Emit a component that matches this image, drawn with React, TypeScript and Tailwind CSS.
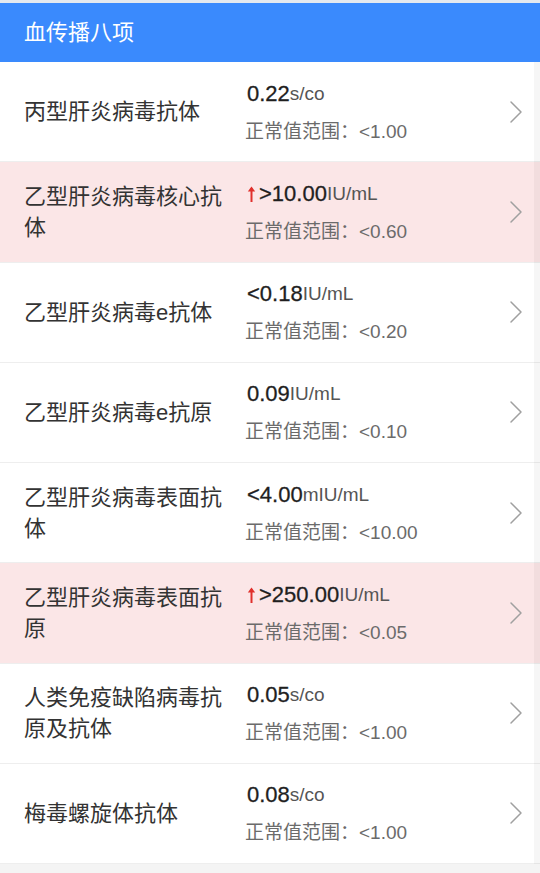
import React from "react";

type Item = {
  name: string;
  value: string;
  unit: string;
  range: string;
  high?: boolean;
};

const items: Item[] = [
  { name: "丙型肝炎病毒抗体", value: "0.22", unit: "s/co", range: "<1.00" },
  { name: "乙型肝炎病毒核心抗体", value: ">10.00", unit: "IU/mL", range: "<0.60", high: true },
  { name: "乙型肝炎病毒e抗体", value: "<0.18", unit: "IU/mL", range: "<0.20" },
  { name: "乙型肝炎病毒e抗原", value: "0.09", unit: "IU/mL", range: "<0.10" },
  { name: "乙型肝炎病毒表面抗体", value: "<4.00", unit: "mIU/mL", range: "<10.00" },
  { name: "乙型肝炎病毒表面抗原", value: ">250.00", unit: "IU/mL", range: "<0.05", high: true },
  { name: "人类免疫缺陷病毒抗原及抗体", value: "0.05", unit: "s/co", range: "<1.00" },
  { name: "梅毒螺旋体抗体", value: "0.08", unit: "s/co", range: "<1.00" },
];

const font = {
  fontFamily: '"Liberation Sans", "Noto Sans CJK SC", sans-serif',
};

function Chevron() {
  return (
    <svg width="14" height="24" viewBox="0 0 14 24" fill="none">
      <path d="M2 2 L12 12 L2 22" stroke="#a0a0a0" strokeWidth="1.5" strokeLinecap="round" strokeLinejoin="round" />
    </svg>
  );
}

function UpArrow() {
  return (
    <svg width="9" height="18" viewBox="0 0 9 18" fill="none" className="mr-[3px]">
      <path d="M4.5 17 V3" stroke="#e0302c" strokeWidth="2" />
      <path d="M0.8 6.5 L4.5 1.5 L8.2 6.5 Z" fill="#e0302c" />
    </svg>
  );
}

function Row({ item }: { item: Item }) {
  return (
    <div
      className={`flex h-[100.25px] items-center border-b border-[#eeeeee] pl-6 ${
        item.high ? "bg-[#fbe6e7]" : "bg-white"
      }`}
    >
      <div className="w-[205px] shrink-0 text-[22px] leading-[31px] text-[#333333]">{item.name}</div>
      <div className="ml-[16px] flex flex-1 flex-col pt-[2px]">
        <div className="flex h-[30px] items-center pl-[2px] text-[#1f1f1f]">
          {item.high ? <UpArrow /> : null}
          <span className="text-[22px] leading-[30px] [-webkit-text-stroke:0.3px_#1f1f1f]">{item.value}</span>
          <span className="text-[19px] leading-[30px] text-[#555555]">{item.unit}</span>
        </div>
        <div className="mt-[8px] h-[30px] text-[19px] leading-[30px] text-[#6b6b6b]">
          正常值范围：{item.range}
        </div>
      </div>
      <div className="mr-[17px] flex items-center">
        <Chevron />
      </div>
    </div>
  );
}

export default function App() {
  return (
    <div className="min-h-[873px] w-[540px] bg-[#f4f4f4]" style={font}>
      <div className="h-[3px] bg-[#e4e9ef]" />
      <div className="flex h-[59px] items-center bg-[#3a8afd] pl-6 text-[22px] text-white">
        血传播八项
      </div>
      <div className="relative">
        {items.map((it) => (
          <Row key={it.name} item={it} />
        ))}
        <div className="pointer-events-none absolute right-0 top-0 h-full w-[6px] bg-black/[0.035]" />
      </div>
    </div>
  );
}
